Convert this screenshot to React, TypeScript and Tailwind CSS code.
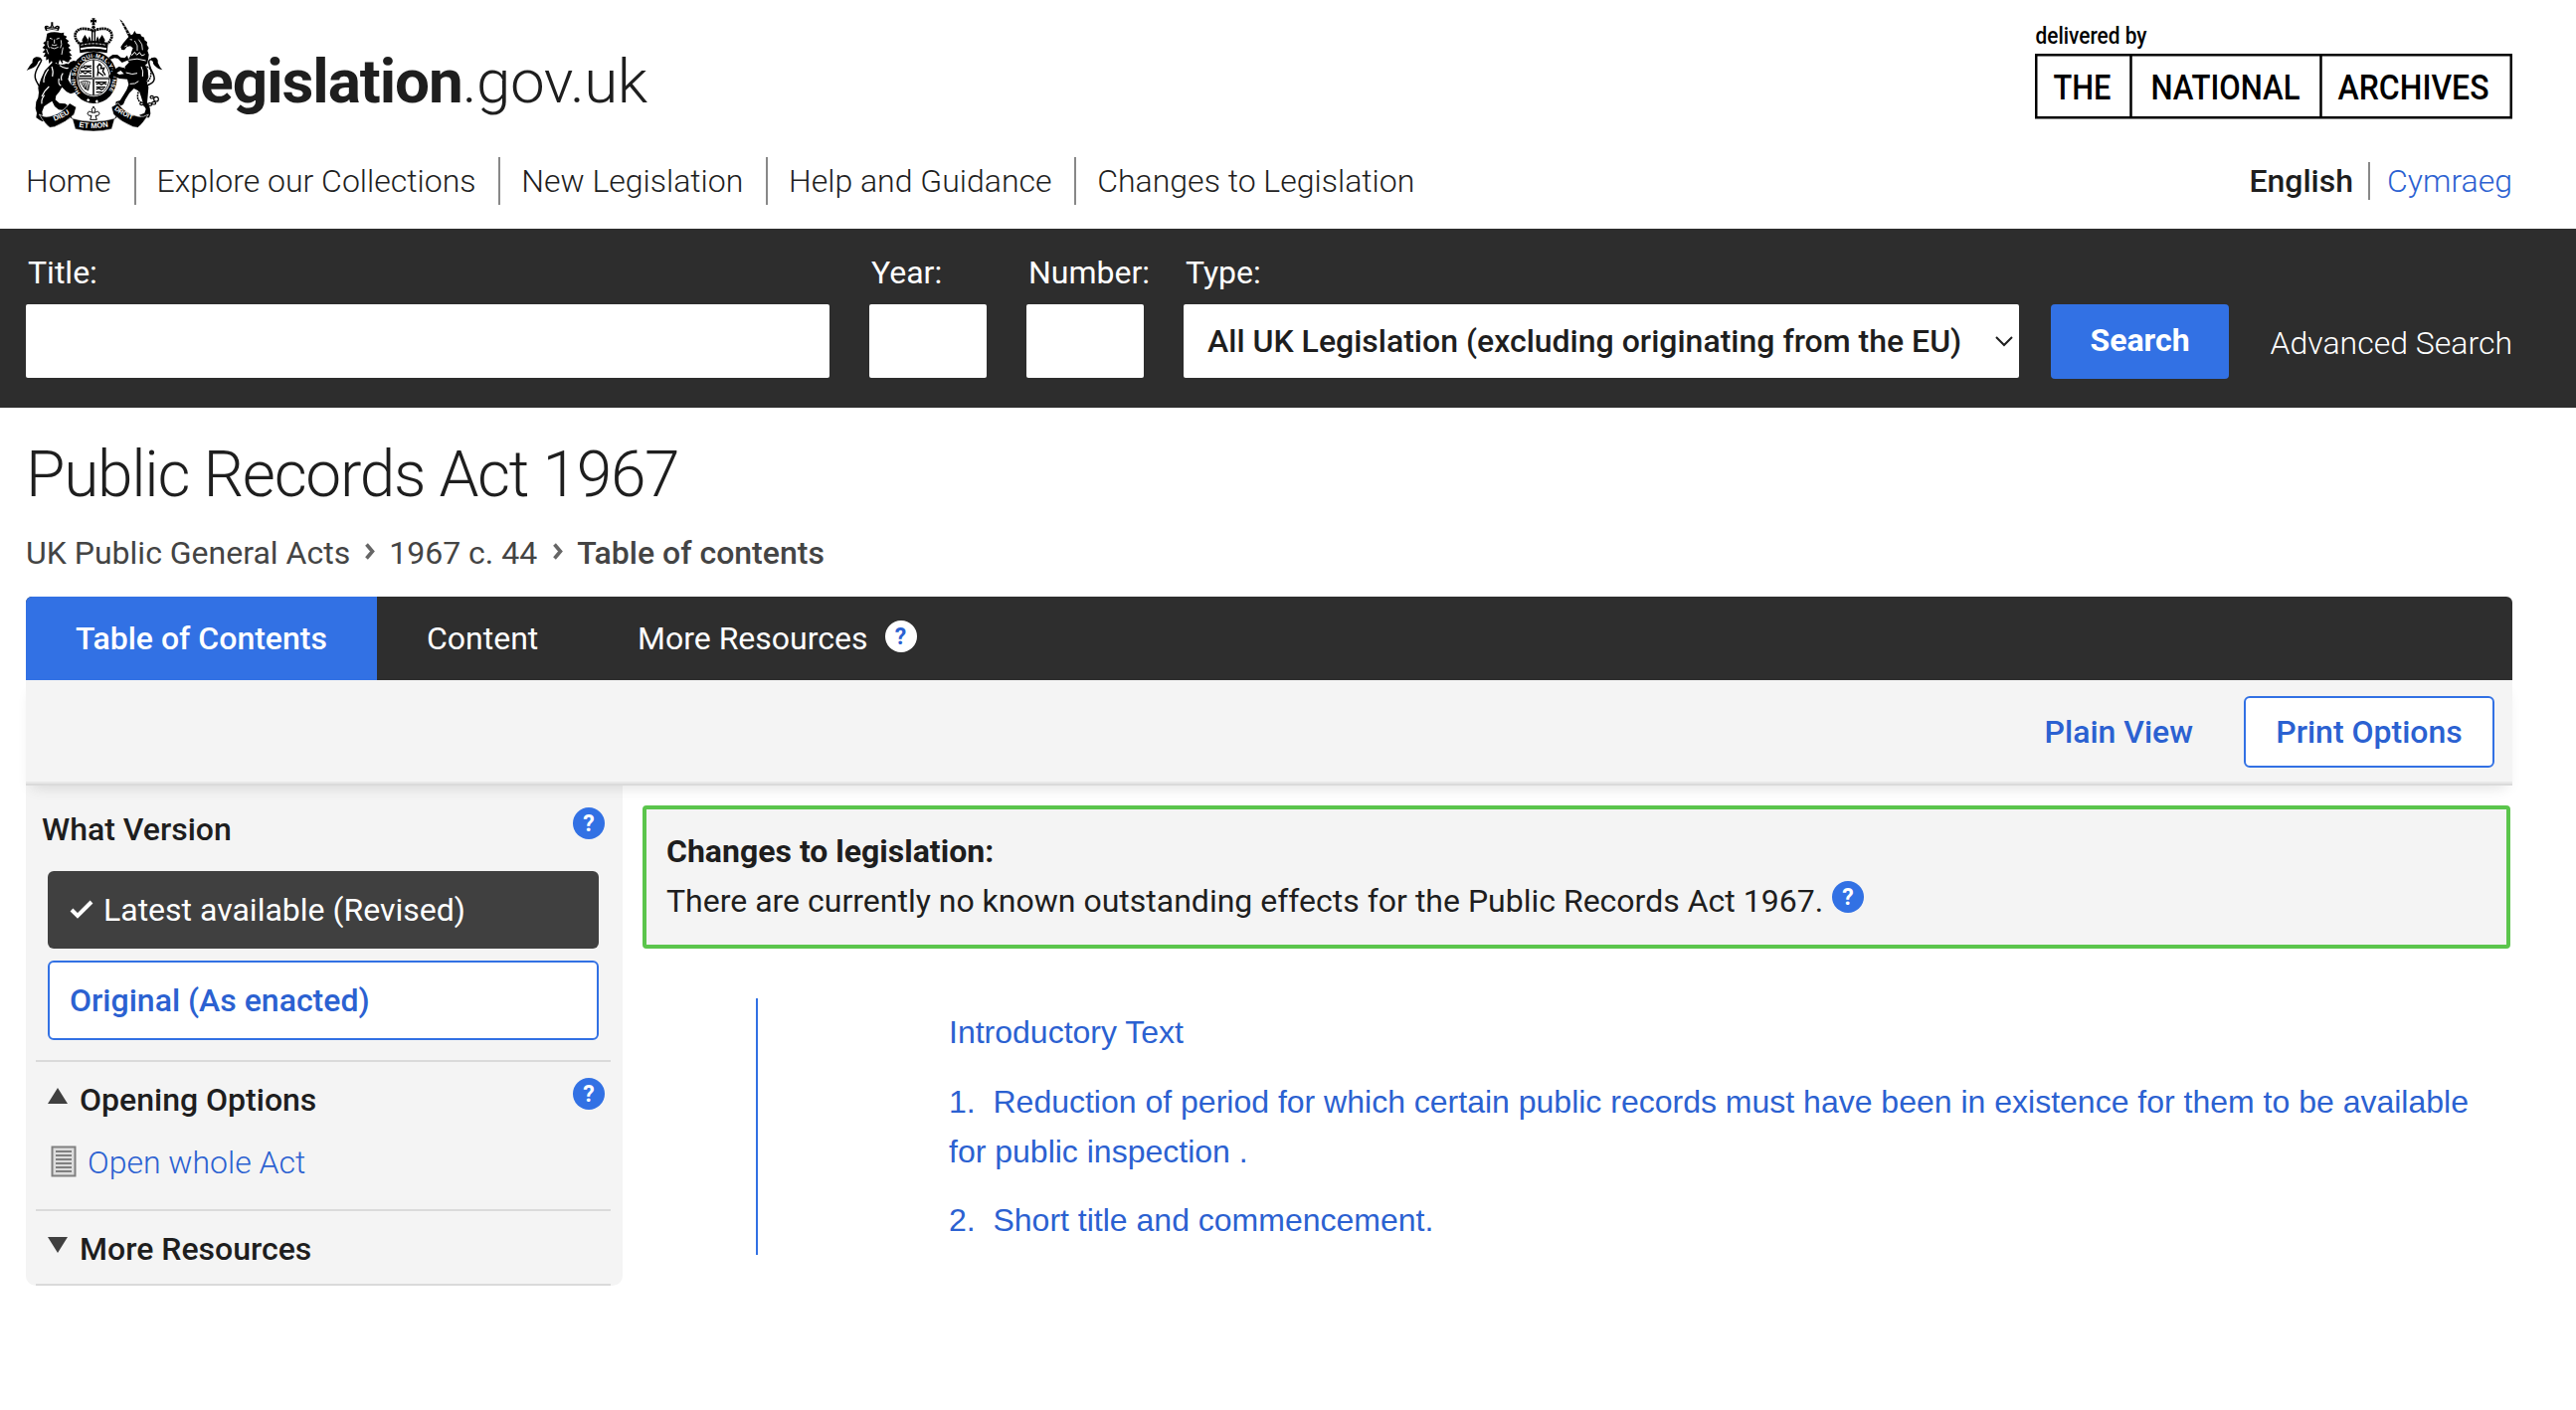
import React from "react";

const navItems = ["Home", "Explore our Collections", "New Legislation", "Help and Guidance", "Changes to Legislation"];

function Crest() {
  return (
    <svg viewBox="45 20 420 345" className="-ml-px h-[115px] w-[140px] shrink-0" fill="#000">
      {/* imperial crown */}
      <path d="M247 24h10l-2 6 6-2v9l-6-2 2 10h-10l2-10-6 2v-9l6 2z" />
      <circle cx="252" cy="51" r="5" />
      <path d="M209 100c-20-18-14-40 6-44 12-2 28 2 37 6 9-4 25-8 37-6 20 4 26 26 6 44" fill="none" stroke="#000" strokeWidth="8" strokeDasharray="6 1.5" />
      <path d="M248 58v42M256 58v42" fill="none" stroke="#000" strokeWidth="4" />
      <path d="M226 74l9 14-5 16h-7l-6-14zM278 74l-9 14 5 16h7l6-14zM240 78l4 12-2 14h-6l-1-14zM264 78l-4 12 2 14h6l1-14z" />
      <path d="M208 98q44-12 88 0l-3 31q-41-9-82 0z" />
      <path d="M214 105q38-9 76 0" fill="none" stroke="#fff" strokeWidth="2.5" strokeDasharray="8 3" />
      <path d="M213 117q39-9 78 0" fill="none" stroke="#fff" strokeWidth="6" />
      {/* garter and shield */}
      <ellipse cx="253" cy="203" rx="70" ry="78" />
      <ellipse cx="253" cy="203" rx="51" ry="58" fill="#fff" />
      <ellipse cx="253" cy="203" rx="47" ry="54" fill="#fff" stroke="#000" strokeWidth="2.5" />
      <path d="M252 149v108M206 205h94" stroke="#000" strokeWidth="6" />
      <path d="M252 149v108M206 205h94" stroke="#fff" strokeWidth="1.5" />
      <path d="M222 168h24M214 174l8-3 6 5 8-5 10 4M212 183h34M211 190l8-4 8 5 8-5 11 5M210 198h36M258 217h34M260 224l8-4 8 5 8-5 8 4M260 232h28M260 239l8-4 8 5 8-4M260 247h18" fill="none" stroke="#000" strokeWidth="3.5" />
      <path d="M264 198c2-16 4-20 0-28l6-8 6 6-2 8 10-2-4 10 8 12M266 186l16 12" fill="none" stroke="#000" strokeWidth="4" />
      <path d="M213 216q14-6 28 0l-5 26q-14-4-23-26zM220 217l8 22M226 216l5 24M233 216l2 22" fill="none" stroke="#000" strokeWidth="2.5" />
      <defs>
        <path id="garter" d="M210 251A59 66 0 1 1 296 251" />
        <path id="scrollLeft" d="M134 334Q168 322 193 301" />
        <path id="scrollRight" d="M314 300Q342 321 376 332" />
        <path id="scrollMid" d="M208 352Q252 360 300 351" />
      </defs>
      <g fill="#fff" fontFamily="Liberation Sans, sans-serif" fontWeight="700">
        <text fontSize="17" dy="3" letterSpacing="1.6">
          <textPath href="#garter">HONI·SOIT·QUI·MAL·Y·PENSE</textPath>
        </text>
      </g>
      <path d="M236 266l5 5-5 5-5-5zM262 270l5 5-5 5-5-5z" fill="#fff" />
      {/* lion */}
      <path d="M108 62l-4-10q0-7 8-6 6 1 8 6 2-8 7-8t7 8q2-5 8-6 8-1 8 6l-4 10q-19-6-38 0zM124 36h6v9h-6z" />
      <path d="M111 58q16-5 32 0M112 52h4M125 50h5M140 52h4" stroke="#fff" strokeWidth="2.5" fill="none" />
      <path d="M112 70q20-8 42-1l9-2-1 8 10 4-4 6 10 8-5 5 9 9-6 5 9 9-7 4 10 13-8-1 8 11-9 1 3 8-12 0-8-6-4 10-8-12-4 14-8-6-6 10-6-14-8 8-2-14-7 4 0-12-8 2 6-12-9-2 8-9-8-5 8-8-6-6 8-6z" />
      <path d="M120 84l8 3M140 87l9-3M134 88v12M126 104q8 4 16 0M122 112q12 8 24-1M114 92q-2 14 4 22M154 90q4 14-2 24M110 116l6 16M160 112l-4 22" fill="none" stroke="#fff" strokeWidth="2.6" />
      <path d="M130 156q20 14 42 4l20-8 16 4-12 14-10 8-5 10-6 20 8 14 14 14-2 12-12 4-12-6-14-14-8 14-10 12-2 12 12 10 18 2 14 10-2 12-14-2-18-2-12-10-8-16-12 8-12 8-6 16 2 14 8 12-8 4-8-4-12-8 2-14-4-14 2-20 6-12 2-16-2-14 8-26 12-26z" />
      <path d="M158 152l18 8 10-12 8-8M150 166q14 12 26 8M116 178q-16 22-14 40M148 206q-4 16 6 22M118 230q-16 14-22 30M160 190q-8 10-4 22M126 170q6 14 2 30M104 256q-10 12-8 26" fill="none" stroke="#fff" strokeWidth="3.5" />
      <path d="M92 246C96 222 62 216 82 176c8-16 18-28 10-28-10-1-8 14-18 16" fill="none" stroke="#000" strokeWidth="4.5" />
      <path d="M94 144c-16-8-28 0-26 14-8 6-12 16-18 24 8-6 16-6 22-10 10-6 12-12 12-18 6-4 10-4 10-10z" />
      {/* unicorn */}
      <path d="M331 27l9 7 27 44-8 4z" />
      <path d="M334 38l8-2M341 49l8-2M348 60l8-2M354 70l8-2" stroke="#fff" strokeWidth="2" />
      <path d="M358 80l13-8 5-10 5 8 13 2 2 6 9 4 1 8 8 6-1 8 6 10-4 8 4 12-4 26-14 10-34-4-12-14 8-14 4-14 4-10-8-6-10 2-8 10-8-1-3-8 8-12z" />
      <path d="M362 88l7 1M346 110l8-4M376 92q12 14 8 30M388 88q14 14 12 32" stroke="#fff" strokeWidth="2.6" fill="none" />
      <path d="M362 128l6 8 8-10 7 9 8-8 7 10 9-4M358 150q26-8 52 2" fill="none" stroke="#fff" strokeWidth="3" />
      <path d="M362 154q22-4 44 6l10 20 2 22-6 14 6 16-2 24-2 22 8 16 2 18-4 12-22 0-8-8 16-6 4-12-8-16-6-20-6-18-16-8-14 14-12 20-6 14-12 6-12-4 2-10 12-4 10-16 10-16 6-16-4-16-24-2-18-8 0 10-8 2-6-10 6-10 12-4 14 8 14-2-10-10-14 8-2 10-9-2-2-12 8-8 14-8 14 4z" />
      <path d="M358 150l-20 8-12-12-10-2-14 4-4-6 12-8 14 0 10 8 12 2 8-8z" />
      <path d="M336 166l12 8M350 188q20 8 34 2M362 222q16 2 26-8M396 170q8 14 4 30" stroke="#fff" strokeWidth="3" fill="none" />
      <path d="M412 230C412 222 446 224 432 192c-10-18-20-44-6-44 8 0 8 12 18 16" fill="none" stroke="#000" strokeWidth="4.5" />
      <path d="M426 144c16-6 22 4 20 14 4 8 8 16 14 22-8-2-14-4-20-10-6-6-10-10-8-16-4-2-8-4-6-10z" />
      <path d="M412 170c16 4 16 22 10 36s-32 26-36 46 6 26 20 30" fill="none" stroke="#000" strokeWidth="4.5" strokeDasharray="6 2" />
      <g fill="none" stroke="#000" strokeWidth="3.5">
        <ellipse cx="398" cy="282" rx="6" ry="4" />
        <ellipse cx="410" cy="286" rx="6" ry="4" />
        <ellipse cx="422" cy="284" rx="6" ry="4" />
        <ellipse cx="434" cy="280" rx="6" ry="4" />
        <circle cx="441" cy="268" r="7" />
        <ellipse cx="428" cy="262" rx="5" ry="4" />
      </g>
      {/* motto scrolls */}
      <path d="M88 314q14 10 32 6 38-8 60-40l20 12-6 22q-24 24-60 38l-14 2q-14-10-32-40z" stroke="#fff" strokeWidth="2" />
      <path d="M418 314q-14 10-32 6-38-8-60-40l-20 12 6 22q24 24 60 38l14 2q14-10 32-40z" stroke="#fff" strokeWidth="2" />
      <path d="M192 304q-16 10-6 22 10 10 30 8M312 304q16 10 6 22-10 10-30 8" fill="none" stroke="#000" strokeWidth="3" />
      <path d="M188 326q64 20 128 0l-9 32q-55 14-110 0z" stroke="#fff" strokeWidth="1.5" />
      <g fill="#fff" fontFamily="Liberation Sans, sans-serif" fontWeight="700">
        <text fontSize="22">
          <textPath href="#scrollLeft">DIEU</textPath>
        </text>
        <text fontSize="20">
          <textPath href="#scrollRight">DROIT</textPath>
        </text>
        <text fontSize="23">
          <textPath href="#scrollMid">ET MON</textPath>
        </text>
      </g>
      <path d="M252 290q10 10 2 20 14-10 16 2-2 8-12 6l4 12h-20l4-12q-10 2-12-6 2-12 16-2-8-10 2-20z" fill="#fff" stroke="#000" strokeWidth="3" />
    </svg>
  );
}

function Help({ inverse = false }: { inverse?: boolean }) {
  return (
    <span
      className={
        inverse
          ? "flex size-8 shrink-0 items-center justify-center rounded-full bg-white text-[23px] leading-none font-bold text-[#2b61d1]"
          : "flex size-8 shrink-0 items-center justify-center rounded-full bg-[#3271e4] text-[23px] leading-none font-bold text-white"
      }
    >
      ?
    </span>
  );
}

function Crumb() {
  return (
    <svg viewBox="0 0 11 17" className="mt-[-4px] h-[17px] w-[11px]" fill="none" stroke="#666" strokeWidth="3.6">
      <path d="M2.5 1.5l6 7-6 7" />
    </svg>
  );
}

function Archives() {
  return (
    <svg viewBox="0 0 480 108" className="h-[108px] w-[480px]" fontFamily="Roboto, sans-serif" fontWeight="500">
      <text x="0.5" y="30.5" fontSize="23.5" textLength="112" lengthAdjust="spacingAndGlyphs">delivered by</text>
      <path d="M1.25 42.25h477.5v63H1.25zM96.5 42v63M287.5 42v63" fill="none" stroke="#000" strokeWidth="2.5" />
      <text x="18.5" y="87" fontSize="35" textLength="58" lengthAdjust="spacingAndGlyphs">THE</text>
      <text x="116.5" y="87" fontSize="35" textLength="150" lengthAdjust="spacingAndGlyphs">NATIONAL</text>
      <text x="304.5" y="87" fontSize="35" textLength="152" lengthAdjust="spacingAndGlyphs">ARCHIVES</text>
    </svg>
  );
}

export default function App() {
  return (
    <div className="h-[1418px] w-[2590px] overflow-hidden bg-white font-['Roboto',sans-serif] text-[32px] leading-[50px] whitespace-nowrap text-[#1e1e1e]">
      <header className="h-[230px] pr-16 pl-[26px]">
        <div className="flex h-[157px] justify-between">
          <div className="flex pt-[17px]">
            <Crest />
            <div className="ml-[21px] pt-[29px] text-[62px] leading-[72px]">
              <span className="font-bold tracking-[-1.05px]">legislation</span>
              <span className="font-light tracking-[-0.5px]">.gov.uk</span>
            </div>
          </div>
          <div className="pt-[13px]">
            <Archives />
          </div>
        </div>
        <div className="flex justify-between font-light">
          <nav className="flex h-[50px]">
            {navItems.map((item, i) => (
              <a key={item} className={i === 0 ? "pr-[23px]" : "flex"}>
                {i > 0 && <i className="mt-px mr-[21px] h-12 w-0.5 bg-[#888]" />}
                <span className={i > 0 && i < 4 ? "pr-[22.7px]" : ""}>{item}</span>
              </a>
            ))}
          </nav>
          <div className="flex">
            <span className="font-medium">English</span>
            <i className="mt-1.5 mr-[17px] ml-[15px] h-[38px] w-0.5 bg-[#888]" />
            <a className="text-[#2b61d1]">Cymraeg</a>
          </div>
        </div>
      </header>

      <form className="flex h-[180px] bg-[#2d2d2d] pt-[19px] pl-[26px] text-white">
        <label className="mr-10 w-[808px]">
          <span className="block h-[57px] pl-0.5">Title:</span>
          <span className="block h-[74px] rounded-xs bg-white" />
        </label>
        <label className="mr-10 w-[118px]">
          <span className="block h-[57px] pl-0.5">Year:</span>
          <span className="block h-[74px] rounded-xs bg-white" />
        </label>
        <label className="mr-10 w-[118px]">
          <span className="block h-[57px] pl-0.5">Number:</span>
          <span className="block h-[74px] rounded-xs bg-white" />
        </label>
        <label className="mr-8 w-[840px]">
          <span className="block h-[57px] pl-0.5">Type:</span>
          <span className="flex h-[74px] items-center justify-between rounded-xs bg-white pr-1.5 pl-6 font-medium text-[#1e1e1e]">
            All UK Legislation (excluding originating from the EU)
            <svg viewBox="0 0 18 11" className="h-[11px] w-[18px]" fill="none" stroke="#1e1e1e" strokeWidth="2">
              <path d="M1 1l8 8 8-8" />
            </svg>
          </span>
        </label>
        <button type="button" className="mt-[57px] h-[75px] w-[179px] rounded-sm bg-[#3271e4] pb-1 text-center font-bold">
          Search
        </button>
        <a className="mt-[71px] ml-[41.5px] font-light">Advanced Search</a>
      </form>

      <main className="w-[2526px] pl-[26px]">
        <h1 className="h-[120px] pt-[32px] text-[64px] leading-[72px] font-light tracking-[-1.28px]">Public Records Act 1967</h1>
        <div className="flex h-[70px] items-start text-[#444]">
          <div className="flex h-[52px] items-center">
            <span>UK Public General Acts</span>
            <span className="mx-[14px]"><Crumb /></span>
            <span>1967 c. 44</span>
            <span className="mx-[14.5px]"><Crumb /></span>
            <span className="font-medium">Table of contents</span>
          </div>
        </div>

        <div className="flex h-[84px] items-center rounded-t-md bg-[#2e2e2e] text-white">
          <div className="relative flex h-[84px] w-[353px] items-center justify-center rounded-tl-md bg-[#3271e4] font-medium">
            Table of Contents
            <i className="absolute top-[84px] left-[159px] border-x-[14px] border-t-[12px] border-x-transparent border-t-[#3271e4]" />
          </div>
          <span className="ml-[50px] w-[212px]">Content</span>
          <span>More Resources</span>
          <span className="mb-1 ml-[17px]"><Help inverse /></span>
        </div>

        <div className="relative z-10 flex h-[106px] items-start justify-end border-b-2 border-[#dadada] bg-[#f4f4f4] pt-4 pr-[18px] font-medium text-[#2b61d1] shadow-[inset_0_-2px_0_#e8e8e8,0_8px_14px_-6px_rgba(0,0,0,0.12)]">
          <a className="mt-[11px] mr-[51px]">Plain View</a>
          <a className="flex h-[72px] w-[252px] items-center justify-center rounded-md border-2 border-[#3271e4] bg-white">Print Options</a>
        </div>

        <div className="flex">
          <aside className="h-[503px] w-[600px] rounded-b-[10px] bg-[#f4f4f4] pr-3 pl-[10px] font-medium">
            <div className="h-[278px] border-b-2 border-[#dadada] px-3">
              <div className="flex h-[86px] justify-between pt-[19px]">
                <h2 className="-ml-1.5">What Version</h2>
                <span className="-mr-1.5 pt-[3px]"><Help /></span>
              </div>
              <div className="flex h-[78px] items-center rounded-md bg-[#404040] pl-[22px] font-normal text-white">
                <svg viewBox="0 0 24 20" className="mr-[10px] h-5 w-6" fill="none" stroke="#fff" strokeWidth="4">
                  <path d="M2 10l6 6L22 2" />
                </svg>
                Latest available (Revised)
              </div>
              <div className="mt-3 flex h-20 items-center rounded-md border-2 border-[#3271e4] bg-white pl-5 text-[#2b61d1]">Original (As enacted)</div>
            </div>
            <div className="h-[150px] border-b-2 border-[#dadada] px-3">
              <div className="flex h-[76px] pt-[13px]">
                <i className="mt-[13px] mr-3 h-0 border-x-[10px] border-b-[16px] border-x-transparent border-b-[#404040]" />
                <h2>Opening Options</h2>
                <span className="-mr-1.5 ml-auto pt-[3px]"><Help /></span>
              </div>
              <div className="flex font-light text-[#2b61d1]">
                <svg viewBox="0 0 26 32" className="mt-[8px] mr-[11px] ml-[3px] h-8 w-[26px]" fill="#ddd" stroke="#808080" strokeWidth="2">
                  <path d="M1.5 1.5h23v29h-23zM5 6h16M5 10h16M5 14h16M5 18h16M5 22h16M5 26h16" />
                </svg>
                Open whole Act
              </div>
            </div>
            <div className="flex h-[75px] border-b-2 border-[#dadada] px-3 pt-[13px]">
              <i className="mt-[13px] mr-3 h-0 border-x-[10px] border-t-[16px] border-x-transparent border-t-[#404040]" />
              <h2>More Resources</h2>
            </div>
          </aside>

          <section className="ml-5 w-[1878px] pt-5">
            <div className="h-36 rounded-sm border-4 border-[#5bc54c] bg-[#f4f4f4] pt-[17px] pl-5">
              <h3 className="font-bold">Changes to legislation:</h3>
              <p className="flex">
                There are currently no known outstanding effects for the Public Records Act 1967.
                <span className="ml-[9px] pt-[5px]"><Help /></span>
              </p>
            </div>
            <div className="mt-[50px] ml-[114px] h-[258px] border-l-2 border-[#3271e4] pt-[9px] pl-[192px] font-['Liberation_Sans',Arial,sans-serif] text-[#2b61d1]">
              <p>Introductory Text</p>
              <p className="mt-5">
                1.&nbsp; Reduction of period for which certain public records must have been in existence for them to be available
                <br />
                for public inspection .
              </p>
              <p className="mt-[19px]">2.&nbsp; Short title and commencement.</p>
            </div>
          </section>
        </div>
      </main>
    </div>
  );
}
